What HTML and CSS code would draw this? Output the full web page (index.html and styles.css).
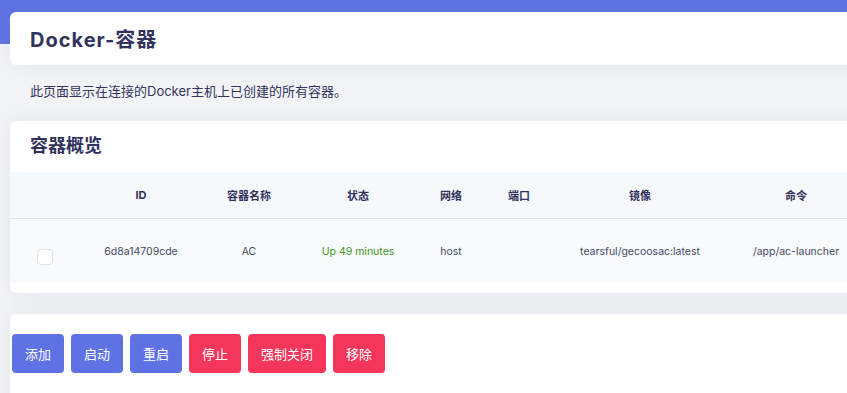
FILE: index.html
```html
<!DOCTYPE html>
<html lang="zh-CN">
<head>
    <meta charset="UTF-8">
    <meta name="viewport" content="width=device-width, initial-scale=1.0">
    <title>Docker-容器</title>
    <link rel="stylesheet" href="styles.css">
</head>
<body>
    <div class="band"></div>

    <div class="page">
        <div class="card title-card">
            <h1>Docker-容器</h1>
        </div>

        <p class="intro">此页面显示在连接的Docker主机上已创建的所有容器。</p>

        <div class="card overview">
            <h2 class="card-title">容器概览</h2>
            <table class="containers">
                <colgroup>
                    <col style="width: 70px">
                    <col style="width: 122px">
                    <col style="width: 94px">
                    <col style="width: 124px">
                    <col style="width: 62px">
                    <col style="width: 74px">
                    <col style="width: 168px">
                    <col style="width: 144px">
                    <col>
                </colgroup>
                <thead>
                    <tr>
                        <th></th>
                        <th>ID</th>
                        <th>容器名称</th>
                        <th>状态</th>
                        <th>网络</th>
                        <th>端口</th>
                        <th>镜像</th>
                        <th>命令</th>
                        <th></th>
                    </tr>
                </thead>
                <tbody>
                    <tr>
                        <td><span class="check"></span></td>
                        <td>6d8a14709cde</td>
                        <td>AC</td>
                        <td class="up">Up 49 minutes</td>
                        <td>host</td>
                        <td></td>
                        <td>tearsful/gecoosac:latest</td>
                        <td>/app/ac-launcher</td>
                        <td></td>
                    </tr>
                </tbody>
            </table>
        </div>

        <div class="card actions">
            <button class="btn btn-primary">添加</button>
            <button class="btn btn-primary">启动</button>
            <button class="btn btn-primary">重启</button>
            <button class="btn btn-danger">停止</button>
            <button class="btn btn-danger">强制关闭</button>
            <button class="btn btn-danger">移除</button>
        </div>
    </div>
</body>
</html>
```

FILE: styles.css
```css
body {
    font-family: 'Inter', 'Noto Sans CJK SC', sans-serif;
    background-color: #f3f4f6;
    color: #525f7f;
    margin: 0;
    padding: 0;
    overflow: hidden;
}
.band {
    height: 44px;
    background-color: #5e72e4;
}
.page {
    width: 1000px;
    margin-top: -32px;
    padding-left: 10px;
}
.card {
    background-color: #fff;
    border-radius: 6px;
    box-shadow: 0 0 24px rgba(136, 152, 170, 0.15);
}
.title-card {
    height: 53px;
    display: flex;
    align-items: center;
    padding: 0 20px;
}
h1 {
    margin: 0;
    font-size: 20px;
    font-weight: 700;
    letter-spacing: 1px;
    color: #32325d;
}
.intro {
    margin: 0;
    padding: 16px 20px 20px 20px;
    font-size: 13px;
    line-height: 20px;
    color: #32325d;
}
.overview {
    padding-bottom: 10px;
}
.card-title {
    margin: 0;
    height: 51px;
    line-height: 50px;
    padding: 0 20px;
    font-size: 18px;
    font-weight: 700;
    color: #32325d;
}
.containers {
    width: 100%;
    table-layout: fixed;
    border-collapse: collapse;
}
.containers th {
    height: 46px;
    background-color: #f6f9fc;
    border-bottom: 1px solid #e0e3e8;
    font-size: 11px;
    font-weight: 700;
    color: #32325d;
    text-align: center;
    padding: 0;
}
.containers td {
    height: 64px;
    background-color: #f9fafb;
    font-size: 10.5px;
    text-align: center;
    padding: 0;
    color: #454a66;
}
.containers .up {
    color: #3a931c;
}
.check {
    display: inline-block;
    width: 14px;
    height: 14px;
    border: 1px solid #dee2e6;
    border-radius: 4px;
    background-color: #fff;
    vertical-align: middle;
    margin-top: 12px;
}
.actions {
    margin-top: 21px;
    padding: 20px 2px 40px;
    display: flex;
    gap: 7px;
    border-radius: 6px 6px 0 0;
}
.btn {
    font-family: inherit;
    font-size: 13px;
    color: #fff;
    height: 39px;
    padding: 0 13px;
    border: none;
    border-radius: 4px;
    cursor: pointer;
}
.btn-primary {
    background-color: #5e72e4;
}
.btn-danger {
    background-color: #f5365c;
}
```
